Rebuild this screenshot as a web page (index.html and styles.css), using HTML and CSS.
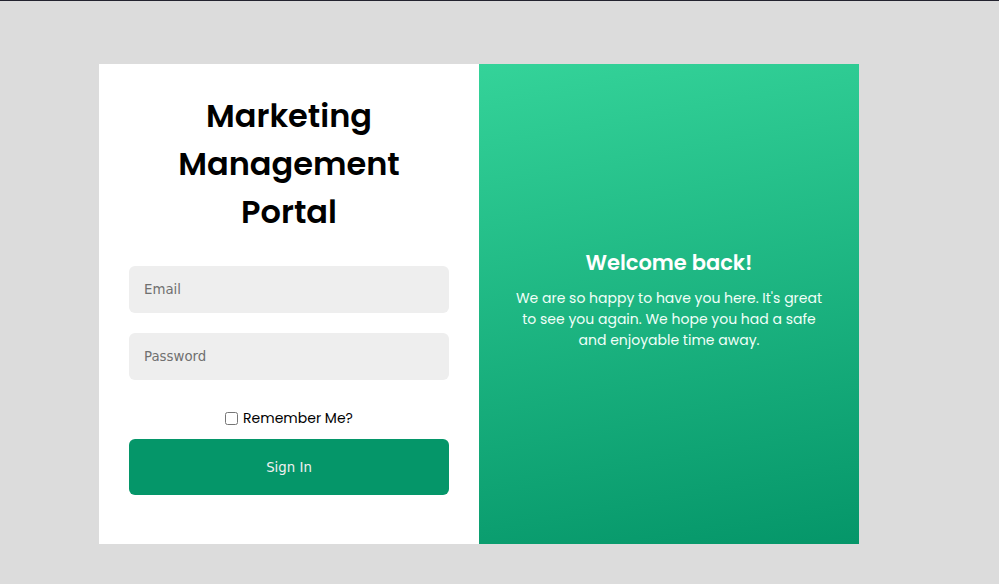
FILE: index.html
```html
<!DOCTYPE html>
<html lang="en">
<head>
<meta charset="utf-8">
<title>Marketing Management Portal</title>
<link rel="stylesheet" href="styles.css">
</head>
<body>
<div class="page">
  <div class="card">
    <div class="login">
      <h1 class="title">Marketing Management Portal</h1>
      <form class="form">
        <input class="field" type="email" placeholder="Email">
        <input class="field" type="password" placeholder="Password">
        <label class="remember"><input type="checkbox" class="check"><span>Remember Me?</span></label>
        <button type="button" class="btn">Sign In</button>
      </form>
    </div>
    <div class="welcome">
      <h2 class="welcome-title">Welcome back!</h2>
      <p class="welcome-text">We are so happy to have you here. It's great to see you again. We hope you had a safe and enjoyable time away.</p>
    </div>
  </div>
</div>
</body>
</html>
```

FILE: styles.css
```css
html, body {
  margin: 0;
  padding: 0;
}
body {
  background: #dcdcdc;
  font-family: Poppins, "Open Sans", "Noto Sans", sans-serif;
}
.page {
  border-top: 1px solid #23232f;
  height: 583px;
  box-sizing: border-box;
  display: flex;
  align-items: flex-start;
  padding: 63px 0 0 99px;
}
.card {
  display: flex;
  width: 760px;
  height: 480px;
  background: #fff;
}
.login {
  width: 380px;
  box-sizing: border-box;
  padding: 28px 30px 0;
  display: flex;
  flex-direction: column;
}
.title {
  margin: 0;
  text-align: center;
  font-size: 32px;
  font-weight: 600;
  line-height: 48px;
  color: #000;
  padding: 0 40px;
}
.form {
  display: flex;
  flex-direction: column;
  margin-top: 30px;
}
.field {
  height: 47px;
  box-sizing: border-box;
  border: none;
  border-radius: 6px;
  background: #eeeeee;
  padding: 0 15px;
  font-family: "DejaVu Sans", sans-serif;
  font-size: 13.33px;
  color: #333;
  margin-bottom: 20px;
  outline: none;
}
.field::placeholder {
  color: #707070;
}
.remember {
  display: flex;
  align-items: center;
  justify-content: center;
  height: 22px;
  margin: 7px 0 10px;
  font-size: 14px;
  color: #000;
}
.check {
  width: 13px;
  height: 13px;
  margin: 0 5px 0 0;
}
.btn {
  height: 56px;
  border: none;
  border-radius: 6px;
  background: #059669;
  font-family: "DejaVu Sans", sans-serif;
  font-size: 13.33px;
  color: #f0f0f0;
}
.welcome {
  width: 380px;
  box-sizing: border-box;
  padding: 0 34px 10px;
  display: flex;
  flex-direction: column;
  justify-content: center;
  align-items: center;
  text-align: center;
  color: #fff;
  background: linear-gradient(170deg, #34d399 0%, #059669 100%);
}
.welcome-title {
  margin: 0 0 10px;
  font-size: 21px;
  font-weight: 600;
  line-height: 30px;
}
.welcome-text {
  margin: 0;
  font-size: 14px;
  line-height: 21px;
  color: #f0fff8;
}
```
